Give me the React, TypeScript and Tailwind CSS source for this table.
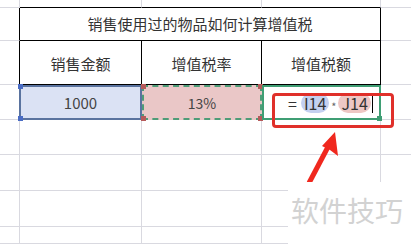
const font = { fontFamily: '"Noto Sans CJK SC", "Noto Sans", sans-serif' };

const grid = "border-r border-b border-[#d9d9e0]";

function Corner({ className }: { className: string }) {
  return <span className={`absolute h-[5px] w-[5px] ${className}`} />;
}

function Arrow() {
  return (
    <svg className="absolute left-[300px] top-[126px]" width="44" height="62" viewBox="0 0 44 62">
      <path d="M9 57 L29 19" stroke="#f0281e" strokeWidth="5" strokeLinecap="butt" fill="none" />
      <path d="M35 6 L38 30 L30 24 L22 20 Z" fill="#f0281e" />
    </svg>
  );
}

export default function App() {
  const rows = [8, 33, 44, 35, 35, 36, 36, 17];
  return (
    <div className="relative h-[244px] w-[411px] overflow-hidden bg-white text-[#333]" style={font}>
      <div className="grid grid-cols-[20px_122px_120px_119px_30px] grid-rows-[8px_33px_44px_35px_35px_36px_36px_17px]">
        {/* row 0 */}
        <div className={grid} />
        <div className="border-r border-b border-r-[#d9d9e0] border-b-black" />
        <div className="border-r border-b border-r-[#d9d9e0] border-b-black" />
        <div className="border-r border-b border-r-[#d9d9e0] border-b-black" />
        <div className="border-b border-[#d9d9e0]" />

        {/* title */}
        <div className="border-r border-b border-r-black border-b-[#d9d9e0]" />
        <div className="col-span-3 flex items-center justify-center border-r border-b border-black pt-[1px] text-[15px]">
          销售使用过的物品如何计算增值税
        </div>
        <div className="border-b border-[#d9d9e0]" />

        {/* header */}
        <div className="border-r border-b border-r-black border-b-[#d9d9e0]" />
        <div className="flex items-center justify-center border-r border-b border-black pt-[3px] text-[15px]">销售金额</div>
        <div className="flex items-center justify-center border-r border-b border-black pt-[3px] text-[15px]">增值税率</div>
        <div className="flex items-center justify-center border-r border-b border-black pt-[3px] text-[15px]">增值税额</div>
        <div className="border-b border-[#d9d9e0]" />

        {/* data */}
        <div className={grid} />
        <div className="relative -ml-[1px] flex items-center justify-center border-2 border-[#5a739f] bg-[#dbe2f4] pt-[2px] text-[15px] text-[#444]">
          1000
          <Corner className="-left-[3px] -top-[3px] bg-[#4a6cc4]" />
          <Corner className="-bottom-[3px] -left-[3px] bg-[#4a6cc4]" />
        </div>
        <div className="relative flex items-center justify-center border-2 border-dashed border-[#4f9c78] bg-[#eac7c7] pt-[1px] text-[14px] text-[#444]">
          13%
          <Corner className="-left-[3px] -top-[3px] bg-[#b65a5a]" />
          <Corner className="-bottom-[3px] -left-[3px] bg-[#b65a5a]" />
          <Corner className="-right-[3px] -top-[3px] bg-[#b65a5a]" />
          <Corner className="-bottom-[3px] -right-[3px] bg-[#b65a5a]" />
        </div>
        <div className="relative flex items-center border-2 border-[#3f9e74] pl-[24px] pt-[1px] text-[16px] text-[#333]">
          <span>=</span>
          <span className="ml-[4px] rounded-full bg-[#c4d0f0] px-[3px] leading-[20px]">I14</span>
          <span className="mx-[2px] translate-y-[3px] text-[11px] text-[#666]">*</span>
          <span className="rounded-full bg-[#eec7c4] px-[3px] leading-[20px]">J14</span>
          <span className="ml-[1px] h-[20px] w-[1px] bg-black" />
          <Corner className="-bottom-[3px] -right-[3px] bg-[#3f9e74]" />
        </div>
        <div className="border-b border-[#d9d9e0]" />

        {rows.slice(4).map((h, i) => (
          <div key={i} className="contents">
            <div className={grid} />
            <div className={grid} />
            <div className={grid} />
            <div className={grid} />
            <div className="border-b border-[#d9d9e0]" />
          </div>
        ))}
      </div>

      {/* callout box */}
      <div className="absolute left-[272px] top-[93px] h-[35px] w-[122px] rounded-[4px] border-[3px] border-[#e0302a]" />
      <Arrow />

      {/* watermark */}
      <div className="absolute left-[288px] top-[182px] flex h-[62px] w-[123px] items-start bg-white pl-[3px] pt-[11px] text-[28px] leading-[34px] text-[#d2d2d2]">
        软件技巧
      </div>
    </div>
  );
}
